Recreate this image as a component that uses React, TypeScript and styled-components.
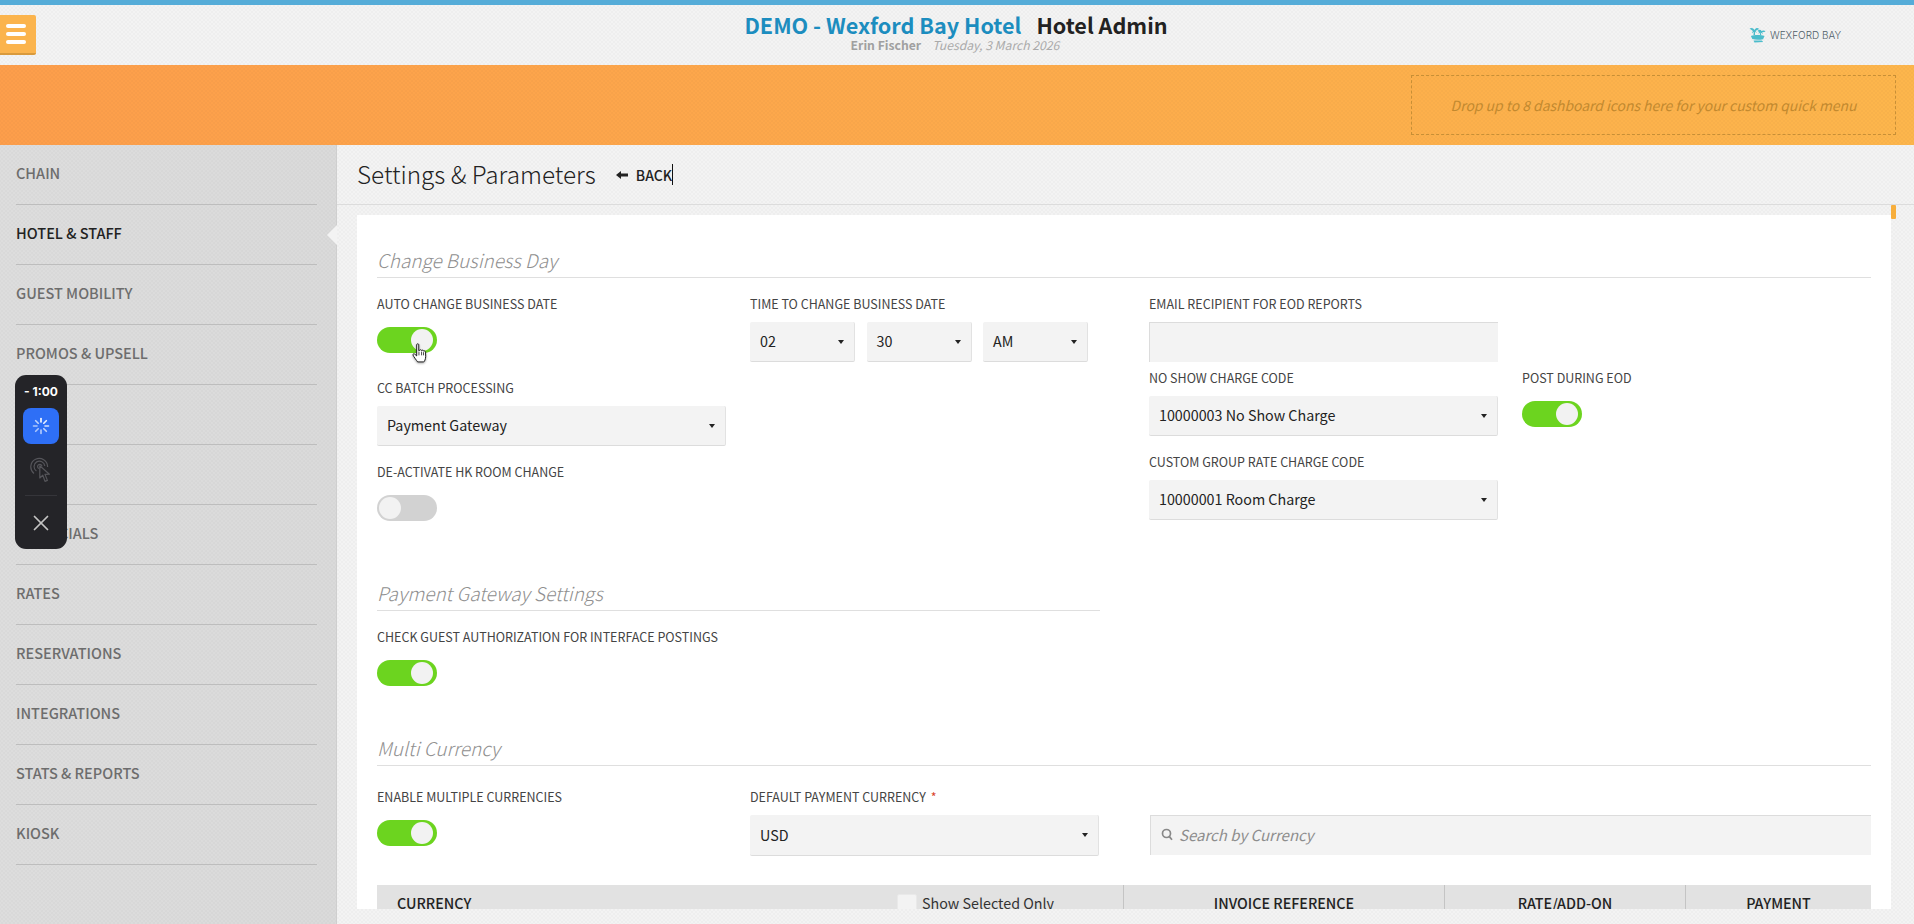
import React from "react";
import styled, { createGlobalStyle } from "styled-components";
import { X } from "lucide-react";

const FONT = `"Noto Sans CJK SC", "Source Sans Pro", "Open Sans", sans-serif`;
const dot = `radial-gradient(rgba(0,0,0,0.02) 1px, transparent 1.2px)`;
const weave = `${dot}, ${dot}`;

const Global = createGlobalStyle`
  html, body { margin: 0; padding: 0; height: 100%; overflow: hidden; }
  body { font-family: ${FONT}; background: #f3f3f3; color: #222; }
  * { box-sizing: border-box; }
`;

const Page = styled.div`
  position: relative;
  width: 1914px;
  height: 924px;
  display: flex;
  flex-direction: column;
  overflow: hidden;
  background-color: #f3f3f3;
  background-image: ${weave};
  background-size: 4px 4px;
  background-position: 0 0, 2px 2px;
`;
const TopStripe = styled.div`
  height: 5px;
  flex: none;
  background: #55acd8;
`;
const Header = styled.header`
  position: relative;
  height: 60px;
  flex: none;
  display: flex;
  flex-direction: column;
  align-items: center;
  padding: 7px 0 0 0;
`;
const MenuButton = styled.button`
  position: absolute;
  left: 0;
  top: 10px;
  width: 36px;
  height: 40px;
  padding: 0 0 0 6px;
  border: none;
  border-bottom: 2px solid #d99a3c;
  border-radius: 0 2px 2px 0;
  background: #fbb44d;
  display: flex;
  flex-direction: column;
  justify-content: center;
  gap: 4px;
`;
const MenuBar = styled.span`
  display: block;
  width: 20px;
  height: 4px;
  border-radius: 2px;
  background: #fff;
`;
const TitleLine = styled.div`
  display: flex;
  gap: 15px;
  height: 26px;
  line-height: 26px;
  font-size: 21.6px;
  font-weight: 700;
  margin-left: -2px;
`;
const HotelName = styled.span`
  color: #1c8dbf;
`;
const AppName = styled.span`
  color: #222;
`;
const SubLine = styled.div`
  display: flex;
  gap: 11px;
  height: 14px;
  line-height: 14px;
  font-size: 12.2px;
  color: #a0a0a0;
  margin-left: -4px;
`;
const UserName = styled.span`
  font-weight: 700;
`;
const DateText = styled.span`
  font-style: italic;
  color: #aaa;
`;
const Logo = styled.div`
  position: absolute;
  left: 1748px;
  top: 20px;
  display: flex;
  align-items: center;
  gap: 3px;
  height: 20px;
  font-family: "Inter", sans-serif;
  font-size: 10px;
  font-weight: 300;
  color: #4f5d68;
  white-space: nowrap;
`;
const QuickBand = styled.div`
  height: 80px;
  flex: none;
  display: flex;
  justify-content: flex-end;
  padding: 10px 18px 10px 0;
  background-color: #fda04b;
  background-image: ${weave}, linear-gradient(90deg, #fd9e4b, #fdb64c);
  background-size: 4px 4px, 4px 4px, auto;
  background-position: 0 0, 2px 2px, 0 0;
`;
const DropZone = styled.div`
  width: 485px;
  height: 60px;
  border: 1px dashed #c78f36;
  display: flex;
  align-items: center;
  justify-content: center;
  font-size: 13.9px;
  font-style: italic;
  color: #c2892f;
`;
const Main = styled.div`
  flex: 1;
  display: flex;
  min-height: 0;
`;
const Sidebar = styled.nav`
  position: relative;
  width: 337px;
  flex: none;
  padding: 0 20px 0 16px;
  background-color: #dcdcdc;
  background-image: ${weave}, linear-gradient(90deg, #dddddd, #dadada);
  background-size: 4px 4px, 4px 4px, auto;
  background-position: 0 0, 2px 2px, 0 0;
  box-shadow: inset -1px 0 0 #cfcfcf;
`;
const NavItem = styled.div<{ $active?: boolean }>`
  position: relative;
  height: 60px;
  padding-top: 17px;
  line-height: 22px;
  font-size: 14.5px;
  font-weight: 500;
  color: ${(p) => (p.$active ? "#222" : "#6d6d6d")};
  border-bottom: 1px solid #bdbdbd;
  ${(p) =>
    p.$active &&
    `&::after {
      content: "";
      position: absolute;
      right: -20px;
      top: 20px;
      border-style: solid;
      border-width: 10px 10px 10px 0;
      border-color: transparent #f3f3f3 transparent transparent;
    }`}
`;
const Content = styled.main`
  position: relative;
  flex: 1;
  min-width: 0;
  display: flex;
  flex-direction: column;
`;
const TitleRow = styled.div`
  height: 60px;
  flex: none;
  display: flex;
  align-items: center;
  padding: 0 0 0 20px;
  border-bottom: 1px solid #dcdcdc;
`;
const PageTitle = styled.h1`
  margin: 0 0 2px;
  font-size: 24.3px;
  font-weight: 300;
  line-height: 56px;
  color: #222;
`;
const BackLink = styled.span`
  display: flex;
  align-items: center;
  margin-left: 20px;
  gap: 8px;
  font-size: 14px;
  font-weight: 500;
  color: #222;
`;
const BackCaret = styled.span`
  width: 1px;
  height: 21px;
  background: #111;
`;
const ScrollThumb = styled.div`
  position: absolute;
  right: 18px;
  top: 60px;
  width: 5px;
  height: 14px;
  border-radius: 1px;
  background: #f7ae3c;
`;
const Scroll = styled.div`
  flex: 1;
  min-height: 0;
  padding: 10px 23px 15px 20px;
`;
const Card = styled.div`
  height: 100%;
  overflow: hidden;
  background: #fff;
  padding: 30px 20px 0;
`;
const SectionHead = styled.h2<{ $top?: number; $width?: number; $after?: number }>`
  margin: ${(p) => p.$top ?? 0}px 0 ${(p) => p.$after ?? 17}px;
  height: 33px;
  line-height: 30px;
  width: ${(p) => (p.$width ? `${p.$width}px` : "auto")};
  font-size: 18.9px;
  font-weight: 300;
  font-style: italic;
  color: #8f8f8f;
  border-bottom: 1px solid #dfdfdf;
`;
const Columns = styled.div<{ $cols: string }>`
  display: grid;
  grid-template-columns: ${(p) => p.$cols};
  align-items: start;
`;
const Column = styled.div<{ $top?: number }>`
  display: flex;
  flex-direction: column;
  padding-top: ${(p) => p.$top ?? 0}px;
`;
const Field = styled.div<{ $after?: number; $width?: number }>`
  width: ${(p) => p.$width ?? 349}px;
  margin-bottom: ${(p) => p.$after ?? 0}px;
`;
const Label = styled.div<{ $gap?: number }>`
  height: 18px;
  line-height: 18px;
  font-size: 12.5px;
  color: #444;
  white-space: nowrap;
  margin-bottom: ${(p) => p.$gap ?? 9}px;
`;
const Required = styled.span`
  color: #d9432a;
  margin-left: 5px;
`;
const Toggle = styled.div<{ $on?: boolean }>`
  position: relative;
  width: 60px;
  height: 26px;
  border-radius: 13px;
  background: ${(p) => (p.$on ? "#6cd41f" : "#d2d2d2")};
  &::after {
    content: "";
    position: absolute;
    top: 2px;
    width: 22px;
    height: 22px;
    border-radius: 50%;
    background: #f2f2f2;
    ${(p) => (p.$on ? "right: 4px;" : "left: 2px;")}
  }
`;
const Select = styled.div<{ $height?: number; $width?: number }>`
  position: relative;
  width: ${(p) => (p.$width ? `${p.$width}px` : "100%")};
  height: ${(p) => p.$height ?? 40}px;
  padding: 0 10px 2px;
  display: flex;
  align-items: center;
  font-size: 14.3px;
  color: #222;
  background: #f3f3f3;
  border-right: 1px solid #e2e2e2;
  border-bottom: 1px solid #dcdcdc;
  border-radius: 2px;
  &::after {
    content: "";
    position: absolute;
    right: 10px;
    top: 50%;
    margin-top: -2px;
    border-style: solid;
    border-width: 4px 3px 0 3px;
    border-color: #222 transparent transparent transparent;
  }
`;
const TimeRow = styled.div`
  display: flex;
  gap: 11.5px;
`;
const TextInput = styled.div`
  width: 349px;
  height: 40px;
  background: #f3f3f3;
  border-top: 1px solid #dcdcdc;
  border-left: 1px solid #dcdcdc;
`;
const Search = styled.div`
  height: 40px;
  display: flex;
  align-items: center;
  gap: 6px;
  padding: 0 0 2px 10px;
  font-size: 15px;
  font-style: italic;
  color: #8d8d8d;
  background: #f3f3f3;
  border-top: 1px solid #dcdcdc;
  border-left: 1px solid #dcdcdc;
`;
const TableHead = styled.div`
  display: grid;
  grid-template-columns: 746px 321px 241px 1fr;
  height: 60px;
  margin-top: 29px;
  background: #e2e2e2;
  font-size: 14.3px;
  color: #222;
`;
const HeadCell = styled.div<{ $divider?: boolean }>`
  text-align: center;
  padding-top: 7px;
  line-height: 22px;
  font-weight: 500;
  border-left: ${(p) => (p.$divider ? "1px solid #c4c4c4" : "none")};
`;
const CurrencyCell = styled.div`
  display: flex;
  padding: 7px 0 0 20px;
  line-height: 22px;
  font-weight: 500;
`;
const ShowSelected = styled.div`
  display: flex;
  gap: 5px;
  margin-left: auto;
  width: 226px;
  font-weight: 400;
  color: #333;
`;
const Checkbox = styled.span`
  width: 20px;
  height: 20px;
  margin-top: 2px;
  background: #f3f3f3;
  border: 1px solid #e9e9e9;
  border-radius: 2px;
`;
const Recorder = styled.div`
  position: absolute;
  left: 15px;
  top: 375px;
  width: 52px;
  height: 174px;
  padding-top: 7px;
  background: #242428;
  border-radius: 11px;
  display: flex;
  flex-direction: column;
  align-items: center;
`;
const Timer = styled.div`
  height: 20px;
  line-height: 20px;
  font-family: "Inter", sans-serif;
  font-size: 12px;
  font-weight: 700;
  color: #fff;
  white-space: nowrap;
`;
const SpinnerButton = styled.div`
  width: 36px;
  height: 36px;
  margin-top: 6px;
  border-radius: 8px;
  background: #2e6ff6;
  display: flex;
  align-items: center;
  justify-content: center;
`;
const GestureSlot = styled.div`
  height: 36px;
  margin-top: 8px;
  display: flex;
  align-items: center;
  justify-content: center;
`;
const RecorderRule = styled.div`
  width: 32px;
  height: 1px;
  margin-top: 7px;
  background: #35353a;
`;
const CloseSlot = styled.div`
  flex: 1;
  display: flex;
  align-items: center;
  justify-content: center;
  color: #c4c4c4;
`;
const HandCursor = styled.svg`
  position: absolute;
  left: 412px;
  top: 343px;
  filter: drop-shadow(0 1px 1px rgba(0, 0, 0, 0.35));
`;

const NAV: { label: string; active?: boolean }[] = [
  { label: "CHAIN" },
  { label: "HOTEL & STAFF", active: true },
  { label: "GUEST MOBILITY" },
  { label: "PROMOS & UPSELL" },
  { label: "" },
  { label: "" },
  { label: "FINANCIALS" },
  { label: "RATES" },
  { label: "RESERVATIONS" },
  { label: "INTEGRATIONS" },
  { label: "STATS & REPORTS" },
  { label: "KIOSK" },
];

const PalmLogo = () => (
  <svg width="19" height="18" viewBox="0 0 18 18" aria-hidden="true">
    <g fill="#4bbccb">
      <path d="M5 9 C5.2 7 5.4 6 5.6 4.6 L6.6 4.6 C6.5 6.2 6.4 7.6 6.6 9 Z" />
      <path d="M11.6 9.4 C11.4 8 11.3 7 11 5.6 L12 5.6 C12.3 7 12.6 8 12.8 9.4 Z" />
      <path d="M1 2.6 C3 1.4 5 2 6 4 C7.5 1.6 9.4 1.6 10.6 3 L7 5 L8.4 7 L6 5.4 L3.4 7.4 L4.4 5 Z" />
      <path d="M9 5 C10.6 3.4 12.4 3.6 13 5 C14.6 4 16.4 4.4 17 5.8 L13.6 6.2 L14.6 8 L12 6.4 L9.8 7.6 L10.6 6 Z" />
      <path d="M2.4 10 C6 8.6 12 8.6 16 10 L14.6 13.2 C11 14 7 14 3.8 13 Z" />
      <path d="M5 14.4 L13.4 14.4 L14.6 16 L6 16.4 Z" />
    </g>
  </svg>
);

const Spinner = () => (
  <svg width="18" height="18" viewBox="0 0 18 18" aria-hidden="true">
    <g stroke="#fff" strokeWidth="1.6" strokeLinecap="round">
      <path d="M9 1.5V5" />
      <path d="M14.3 3.7L11.8 6.2" opacity=".9" />
      <path d="M16.5 9H13" opacity=".8" />
      <path d="M14.3 14.3L11.8 11.8" opacity=".7" />
      <path d="M9 16.5V13" opacity=".65" />
      <path d="M3.7 14.3L6.2 11.8" opacity=".6" />
      <path d="M1.5 9H5" opacity=".6" />
      <path d="M3.7 3.7L6.2 6.2" opacity=".7" />
    </g>
  </svg>
);

const GestureIcon = () => (
  <svg width="22" height="26" viewBox="0 0 22 26" fill="none" stroke="#55555a" strokeWidth="1.2" aria-hidden="true">
    <path d="M4 16.5 A8.4 8.4 0 1 1 17.6 10" />
    <path d="M6.4 14 A5.4 5.4 0 1 1 14.8 9" />
    <path d="M8.8 11.6 A2.2 2.2 0 1 1 12 9.4" />
    <path d="M9.8 8.8 L9.8 21 L12.8 18.2 L15 24.4 L17.4 23.4 L15 17.4 L19.4 17.2 Z" strokeLinejoin="round" fill="#242428" />
  </svg>
);

const BackArrow = () => (
  <svg width="12" height="10" viewBox="0 0 12 10" aria-hidden="true">
    <path d="M0 5 L5 1 V3.6 H12 V6.4 H5 V9 Z" fill="#222" />
  </svg>
);

const SearchIcon = () => (
  <svg width="12" height="13" viewBox="0 0 12 13" fill="none" stroke="#888" strokeWidth="1.7" aria-hidden="true">
    <circle cx="5.5" cy="5.5" r="4" />
    <path d="M8.4 8.6 L11 11.8" />
  </svg>
);

export default function App() {
  return (
    <Page>
      <Global />
      <TopStripe />
      <Header>
        <MenuButton aria-label="Menu">
          <MenuBar />
          <MenuBar />
          <MenuBar />
        </MenuButton>
        <TitleLine>
          <HotelName>DEMO - Wexford Bay Hotel</HotelName>
          <AppName>Hotel Admin</AppName>
        </TitleLine>
        <SubLine>
          <UserName>Erin Fischer</UserName>
          <DateText>Tuesday, 3 March 2026</DateText>
        </SubLine>
        <Logo>
          <PalmLogo />
          WEXFORD BAY
        </Logo>
      </Header>
      <QuickBand>
        <DropZone>Drop up to 8 dashboard icons here for your custom quick menu</DropZone>
      </QuickBand>
      <Main>
        <Sidebar>
          {NAV.map((n, i) => (
            <NavItem key={i} $active={n.active}>
              {n.label}
            </NavItem>
          ))}
        </Sidebar>
        <Content>
          <TitleRow>
            <PageTitle>Settings &amp; Parameters</PageTitle>
            <BackLink>
              <BackArrow />
              <span>BACK</span>
            </BackLink>
            <BackCaret />
          </TitleRow>
          <ScrollThumb />
          <Scroll>
            <Card>
              <SectionHead>Change Business Day</SectionHead>
              <Columns $cols="373px 399px 373px 1fr">
                <Column>
                  <Field $after={26}>
                    <Label $gap={14}>AUTO CHANGE BUSINESS DATE</Label>
                    <Toggle $on />
                  </Field>
                  <Field $after={17}>
                    <Label>CC BATCH PROCESSING</Label>
                    <Select>Payment Gateway</Select>
                  </Field>
                  <Field>
                    <Label $gap={14}>DE-ACTIVATE HK ROOM CHANGE</Label>
                    <Toggle />
                  </Field>
                </Column>
                <Column>
                  <Field $width={338}>
                    <Label>TIME TO CHANGE BUSINESS DATE</Label>
                    <TimeRow>
                      <Select $width={105}>02</Select>
                      <Select $width={105}>30</Select>
                      <Select $width={105}>AM</Select>
                    </TimeRow>
                  </Field>
                </Column>
                <Column>
                  <Field $after={7}>
                    <Label>EMAIL RECIPIENT FOR EOD REPORTS</Label>
                    <TextInput />
                  </Field>
                  <Field $after={17}>
                    <Label>NO SHOW CHARGE CODE</Label>
                    <Select>10000003 No Show Charge</Select>
                  </Field>
                  <Field>
                    <Label>CUSTOM GROUP RATE CHARGE CODE</Label>
                    <Select>10000001 Room Charge</Select>
                  </Field>
                </Column>
                <Column $top={74}>
                  <Field>
                    <Label $gap={14}>POST DURING EOD</Label>
                    <Toggle $on />
                  </Field>
                </Column>
              </Columns>

              <SectionHead $top={57} $width={723}>Payment Gateway Settings</SectionHead>
              <Field>
                <Label $gap={14}>CHECK GUEST AUTHORIZATION FOR INTERFACE POSTINGS</Label>
                <Toggle $on />
              </Field>

              <SectionHead $top={47} $after={22}>Multi Currency</SectionHead>
              <Columns $cols="373px 400px 1fr">
                <Column>
                  <Field>
                    <Label $gap={14}>ENABLE MULTIPLE CURRENCIES</Label>
                    <Toggle $on />
                  </Field>
                </Column>
                <Column>
                  <Field>
                    <Label>
                      DEFAULT PAYMENT CURRENCY<Required>*</Required>
                    </Label>
                    <Select $height={41}>USD</Select>
                  </Field>
                </Column>
                <Column $top={27}>
                  <Search>
                    <SearchIcon />
                    Search by Currency
                  </Search>
                </Column>
              </Columns>

              <TableHead>
                <CurrencyCell>
                  CURRENCY
                  <ShowSelected>
                    <Checkbox />
                    Show Selected Only
                  </ShowSelected>
                </CurrencyCell>
                <HeadCell $divider>INVOICE REFERENCE</HeadCell>
                <HeadCell $divider>RATE/ADD-ON</HeadCell>
                <HeadCell $divider>PAYMENT</HeadCell>
              </TableHead>
            </Card>
          </Scroll>
        </Content>
      </Main>
      <Recorder>
        <Timer>- 1:00</Timer>
        <SpinnerButton>
          <Spinner />
        </SpinnerButton>
        <GestureSlot>
          <GestureIcon />
        </GestureSlot>
        <RecorderRule />
        <CloseSlot>
          <X size={26} strokeWidth={1.6} />
        </CloseSlot>
      </Recorder>
      <HandCursor width="15" height="20" viewBox="0 0 16 21" aria-hidden="true">
        <path
          d="M5 1.6 C5 0.4 7.2 0.4 7.2 1.6 L7.2 8 L8.2 7.6 C8.6 6.8 10 6.9 10.2 7.8 C10.8 7.2 12 7.4 12.2 8.4 C13 8 14.3 8.4 14.4 9.6 L14.6 14 C14.6 17 13.2 19.8 12.6 20 L6 20 C5 18.6 1.2 13.6 1 12.6 C0.8 11.4 2.2 11 3 11.8 L5 13.6 Z"
          fill="#fff"
          stroke="#111"
          strokeWidth="1"
          strokeLinejoin="round"
        />
        <path d="M7.4 9 V13 M10.2 9 V13 M12.3 9.6 V13" stroke="#111" strokeWidth=".8" fill="none" />
      </HandCursor>
    </Page>
  );
}
